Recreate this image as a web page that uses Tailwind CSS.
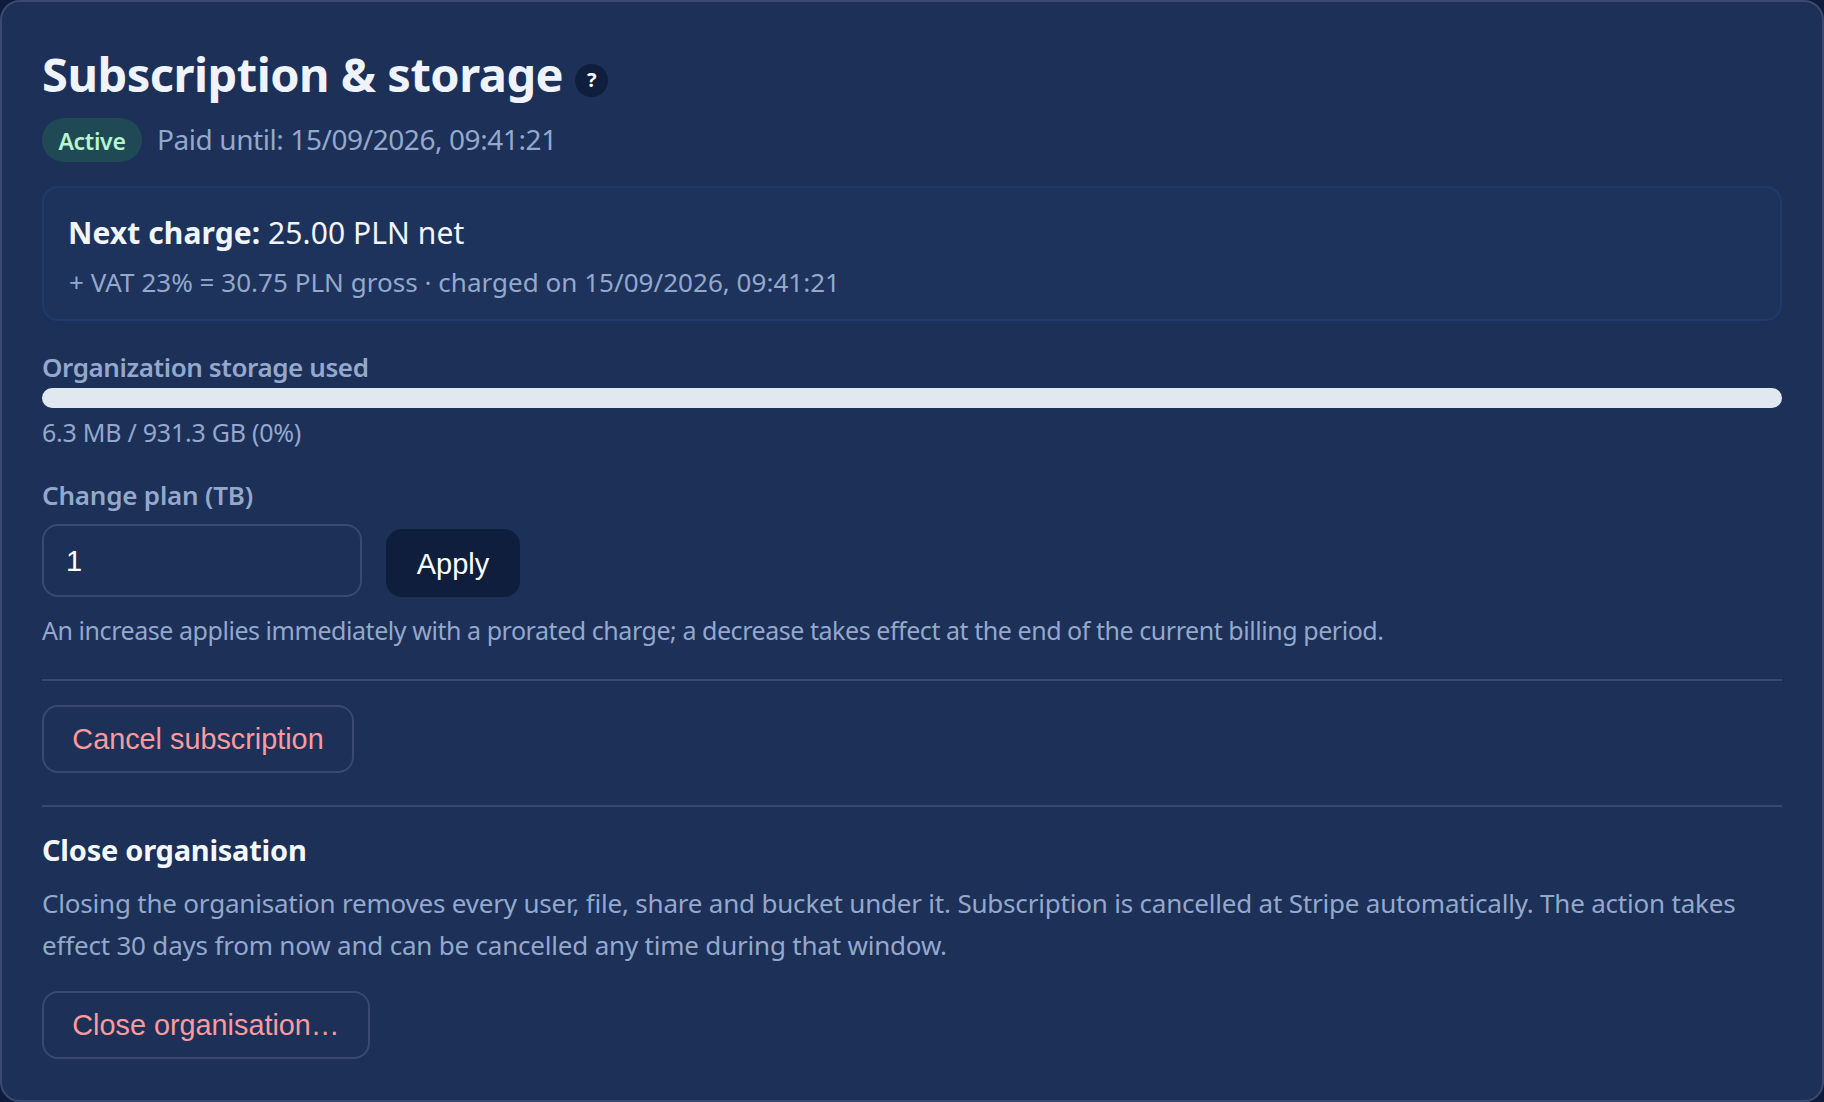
<!doctype html>
<html lang="en"><head><meta charset="utf-8"><title>Subscription &amp; storage</title>
<script src="https://cdn.jsdelivr.net/npm/@tailwindcss/browser@4"></script></head>
<body class="bg-[#0f1b3a] font-['Noto_Sans',sans-serif]">
<main class="w-[1824px] h-[1102px] bg-[#1c3058] border-2 border-[#3a4a6e] rounded-[20px] px-10 pt-[41px] flex flex-col">
  <div class="flex items-center h-[62px]">
    <h1 class="text-[47px] leading-[62px] font-bold text-[#eef3fc] tracking-[-0.5px]">Subscription &amp; storage</h1>
    <span class="ml-3 mt-[12px] w-[33px] h-[33px] rounded-full bg-[#0f1e3d] text-white text-[20px] font-bold flex items-center justify-center">?</span>
  </div>
  <div class="flex items-center mt-[13px] h-[44px]">
    <span class="w-[100px] h-[44px] pt-[2px] rounded-full bg-[#1f4a55] text-[#b6f5cf] text-[23px] font-semibold flex items-center justify-center tracking-[-0.3px]">Active</span>
    <span class="ml-[15px] mb-[2px] text-[28px] text-[#94a8cc] tracking-[-0.42px]">Paid until: 15/09/2026, 09:41:21</span>
  </div>
  <section class="mt-[24px] h-[135px] bg-[#1e335c] border-2 border-[#1f3a6e] rounded-[16px] px-[24px] pt-[25px]">
    <p class="text-[30px] leading-[40px] text-[#f1f5fc] tracking-[0.08px]"><b>Next charge:</b> 25.00 PLN net</p>
    <p class="mt-[11px] pl-px text-[26px] leading-[36px] text-[#94a8cc] tracking-[0.03px]">+ VAT 23% = 30.75 PLN gross · charged on 15/09/2026, 09:41:21</p>
  </section>
  <label class="mt-[29px] text-[26px] leading-[34px] font-semibold text-[#94a8cc] tracking-[-0.4px]">Organization storage used</label>
  <div class="h-5 mt-[4px] rounded-full bg-[#e2e8f0]"></div>
  <p class="mt-[7px] text-[25px] leading-[34px] text-[#94a8cc] tracking-[-0.25px]">6.3 MB / 931.3 GB (0%)</p>
  <label class="mt-[29px] text-[26px] leading-[34px] font-semibold text-[#94a8cc] tracking-[-0.2px]">Change plan (TB)</label>
  <div class="flex items-end gap-6 mt-[12px]">
    <input value="1" class="w-[320px] h-[73px] bg-transparent border-2 border-[#3a4a6e] rounded-[16px] px-[22px] pt-[2px] text-[29px] text-white font-['Liberation_Sans',sans-serif] outline-none">
    <button class="w-[134px] h-[68px] pt-[3px] rounded-[16px] bg-[#0f1e3d] text-white text-[29px] font-['Liberation_Sans',sans-serif]">Apply</button>
  </div>
  <p class="mt-[15px] text-[25px] leading-[36px] text-[#94a8cc] tracking-[-0.45px]">An increase applies immediately with a prorated charge; a decrease takes effect at the end of the current billing period.</p>
  <hr class="mt-[31px] border-0 h-[2px] bg-[#3a4a6e]">
  <button class="mt-[24px] w-[312px] h-[68px] pt-[2px] border-2 border-[#3a4a6e] rounded-[16px] text-[#fc9a9e] text-[28.8px] font-['Liberation_Sans',sans-serif]">Cancel subscription</button>
  <hr class="mt-[32px] border-0 h-[2px] bg-[#3a4a6e]">
  <h2 class="mt-[23px] text-[29px] leading-[40px] font-bold text-[#f4f7fd] tracking-[-0.25px]">Close organisation</h2>
  <p class="mt-[12px] text-[26px] leading-[42px] text-[#94a8cc] tracking-[-0.2px]">Closing the organisation removes every user, file, share and bucket under it. Subscription is cancelled at Stripe automatically. The action takes<br>effect 30 days from now and can be cancelled any time during that window.</p>
  <button class="mt-[25px] w-[328px] h-[68px] pt-px border-2 border-[#3a4a6e] rounded-[16px] text-[#fc9a9e] text-[28.8px] font-['Liberation_Sans',sans-serif]">Close organisation…</button>
</main>
</body></html>
